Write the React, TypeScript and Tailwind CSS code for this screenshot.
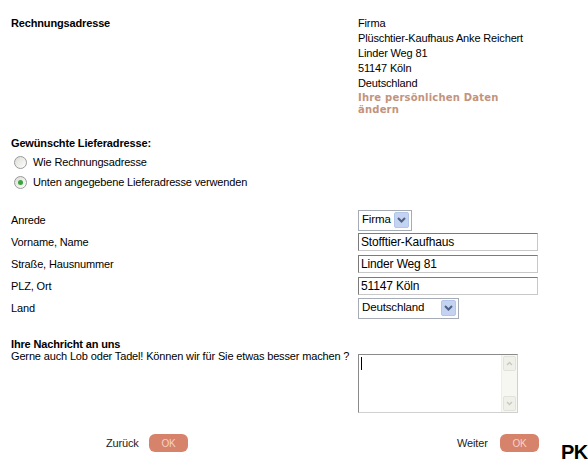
import React from "react";

const font = { fontFamily: '"Liberation Sans", Arial, sans-serif' };

function Radio({ checked }: { checked?: boolean }) {
    return (
        <span className="inline-flex w-[13px] h-[13px] rounded-full border border-[#9a9a9a] bg-gradient-to-br from-[#dcdcd6] to-white items-center justify-center mr-[6px]">
            {checked && <span className="w-[5px] h-[5px] rounded-full bg-[#3aa53a]" />}
        </span>
    );
}

function Chevron() {
    return (
        <span className="flex items-center justify-center w-[15px] h-[16px] bg-[#c3d3f1] border border-[#b2c5ea] rounded-[2px]">
            <svg width="9" height="6" viewBox="0 0 9 6">
                <path d="M1 1 L4.5 4.5 L8 1" stroke="#4d6185" strokeWidth="2" fill="none" />
            </svg>
        </span>
    );
}

function Select({ value, width }: { value: string; width: string }) {
    return (
        <div className={`flex items-center justify-between h-[21px] border border-[#a5acb5] bg-white pl-[3px] pr-[2px] ${width}`}>
            <span className="text-[11.5px] text-black">{value}</span>
            <Chevron />
        </div>
    );
}

function TextInput({ value }: { value: string }) {
    return (
        <div className="flex items-center h-[18px] w-[180px] border border-[#7b7b7b] border-r-[#c8c8c8] border-b-[#c8c8c8] bg-white pl-[2px] text-[12px] text-black">
            {value}
        </div>
    );
}

function OkButton() {
    return (
        <span className="inline-flex items-center justify-center w-[39px] h-[18px] rounded-[6px] bg-[#d7826b] text-[10px] text-[#f6d2c4]">
            OK
        </span>
    );
}

const rows = [
    { label: "Anrede", field: <Select value="Firma" width="w-[54px]" /> },
    { label: "Vorname, Name", field: <TextInput value="Stofftier-Kaufhaus" /> },
    { label: "Straße, Hausnummer", field: <TextInput value="Linder Weg 81" /> },
    { label: "PLZ, Ort", field: <TextInput value="51147 Köln" /> },
    { label: "Land", field: <Select value="Deutschland" width="w-[101px]" /> },
];

export default function App() {
    return (
        <div className="w-[588px] h-[467px] bg-white text-[11px] tracking-[-0.15px] text-black overflow-hidden" style={font}>
            <div className="pt-[16px] pl-[11px] flex">
                <div className="w-[347px] font-bold leading-[15px]">Rechnungsadresse</div>
                <div className="leading-[15px]">
                    <p>Firma</p>
                    <p>Plüschtier-Kaufhaus Anke Reichert</p>
                    <p>Linder Weg 81</p>
                    <p>51147 Köln</p>
                    <p>Deutschland</p>
                    <p
                        className="font-bold text-[10px] leading-[12px] tracking-[0.2px] text-[#c3937d] mt-[1px] w-[150px]"
                        style={{ fontFamily: '"DejaVu Sans", Verdana, sans-serif' }}
                    >
                        Ihre persönlichen Daten ändern
                    </p>
                </div>
            </div>

            <div className="pl-[11px] mt-[20px]">
                <p className="font-bold leading-[15px]">Gewünschte Lieferadresse:</p>
                <div className="pl-[3px] mt-[1px]">
                    <div className="flex items-center h-[20px]">
                        <Radio />
                        <span>Wie Rechnungsadresse</span>
                    </div>
                    <div className="flex items-center h-[20px]">
                        <Radio checked />
                        <span>Unten angegebene Lieferadresse verwenden</span>
                    </div>
                </div>
            </div>

            <div className="pl-[11px] mt-[17px]">
                {rows.map((r) => (
                    <div key={r.label} className="flex items-center h-[22px]">
                        <span className="w-[347px]">{r.label}</span>
                        {r.field}
                    </div>
                ))}
            </div>

            <div className="pl-[11px] mt-[19px]">
                <p className="font-bold leading-[12px]">Ihre Nachricht an uns</p>
                <div className="flex">
                    <span className="w-[347px] shrink-0 whitespace-nowrap leading-[12px]">Gerne auch Lob oder Tadel! Können wir für Sie etwas besser machen ?</span>
                    <div className="mt-[4px] flex w-[160px] h-[59px] border border-[#8a8a8a] border-r-[#d0d0d0] border-b-[#d0d0d0] bg-white">
                        <div className="flex-1 pl-[2px] pt-[2px]">
                            <span className="block w-px h-[13px] bg-black" />
                        </div>
                        <div className="w-[16px] flex flex-col justify-between bg-[#f6f7f0] border-l border-[#eeeee8] p-[1px]">
                            <span className="flex items-center justify-center h-[15px] bg-[#f0f0ea] border border-[#e2e2d8] rounded-[2px]">
                                <svg width="7" height="5" viewBox="0 0 7 5">
                                    <path d="M1 4 L3.5 1.5 L6 4" stroke="#c8cabd" strokeWidth="1.5" fill="none" />
                                </svg>
                            </span>
                            <span className="flex items-center justify-center h-[15px] bg-[#f0f0ea] border border-[#e2e2d8] rounded-[2px]">
                                <svg width="7" height="5" viewBox="0 0 7 5">
                                    <path d="M1 1 L3.5 3.5 L6 1" stroke="#c8cabd" strokeWidth="1.5" fill="none" />
                                </svg>
                            </span>
                        </div>
                    </div>
                </div>
            </div>

            <div className="flex items-center mt-[21px] h-[18px]">
                <span className="ml-[106px] w-[34px] shrink-0 text-[#222]">Zurück</span>
                <span className="ml-[9px] shrink-0"><OkButton /></span>
                <span className="ml-[269px] w-[32px] shrink-0 text-[#222]">Weiter</span>
                <span className="ml-[11px] shrink-0"><OkButton /></span>
                <span className="ml-[22px] mt-[18px] shrink-0 text-[20px] tracking-[-0.5px] font-bold leading-none">PK</span>
            </div>
        </div>
    );
}
